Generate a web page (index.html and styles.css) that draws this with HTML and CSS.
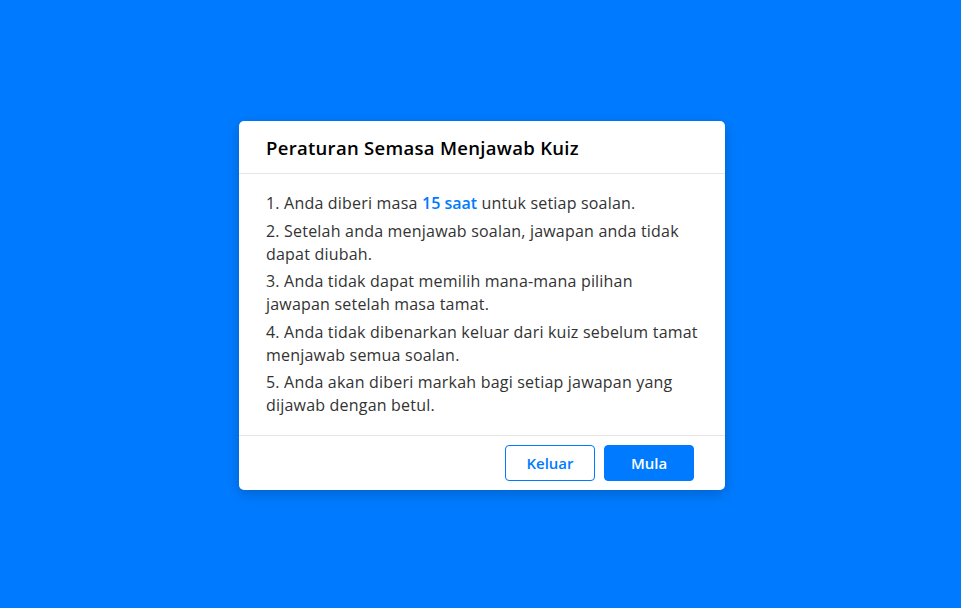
FILE: index.html
```html
<!DOCTYPE html>
<html lang="ms">
<head>
<meta charset="utf-8">
<title>Kuiz</title>
<link rel="stylesheet" href="styles.css">
</head>
<body>
<div class="page">
  <div class="card">
    <div class="card-header">
      <span class="title">Peraturan Semasa Menjawab Kuiz</span>
    </div>
    <div class="card-body">
      <div class="rule">1. Anda diberi masa <span class="hl">15 saat</span> untuk setiap soalan.</div>
      <div class="rule">2. Setelah anda menjawab soalan, jawapan anda tidak<br>dapat diubah.</div>
      <div class="rule">3. Anda tidak dapat memilih mana-mana pilihan<br>jawapan setelah masa tamat.</div>
      <div class="rule">4. Anda tidak dibenarkan keluar dari kuiz sebelum tamat<br>menjawab semua soalan.</div>
      <div class="rule">5. Anda akan diberi markah bagi setiap jawapan yang<br>dijawab dengan betul.</div>
    </div>
    <div class="card-footer">
      <button class="btn btn-outline">Keluar</button>
      <button class="btn btn-solid">Mula</button>
    </div>
  </div>
</div>
</body>
</html>
```
FILE: styles.css
```css
html, body {
  margin: 0;
  padding: 0;
  height: 100%;
}
body {
  background: #007bff;
  font-family: "Open Sans", "Noto Sans", sans-serif;
}
.page {
  height: 100%;
  display: flex;
  align-items: center;
  justify-content: center;
}
.card {
  width: 486px;
  background: #fff;
  border-radius: 5px;
  box-shadow: 0 4px 14px rgba(0, 0, 0, 0.2);
  margin-left: 3px;
  margin-top: 3px;
}
.card-header {
  height: 53px;
  display: flex;
  align-items: center;
  padding: 0 27px;
  border-bottom: 1px solid #e6e6e6;
  box-sizing: border-box;
}
.title {
  font-size: 18.5px;
  font-weight: 600;
  letter-spacing: 0.3px;
  color: #000;
}
.card-body {
  padding: 18px 20px 18px 27px;
  border-bottom: 1px solid #e6e6e6;
}
.rule {
  font-size: 16px;
  line-height: 23px;
  color: #333;
  margin-bottom: 4.5px;
  letter-spacing: 0.2px;
  white-space: nowrap;
}
.rule:last-child {
  margin-bottom: 0;
}
.hl {
  color: #007bff;
  font-weight: 600;
  letter-spacing: 0;
}
.card-footer {
  height: 54px;
  display: flex;
  align-items: center;
  justify-content: flex-end;
  gap: 9px;
  padding: 0 31px;
  box-sizing: border-box;
}
.btn {
  width: 90px;
  height: 36px;
  border-radius: 4px;
  font-family: inherit;
  font-size: 15px;
  font-weight: 600;
  cursor: pointer;
}
.btn-outline {
  background: #fff;
  color: #007bff;
  border: 1px solid #007bff;
}
.btn-solid {
  background: #007bff;
  color: #fff;
  border: 1px solid #007bff;
}
```
